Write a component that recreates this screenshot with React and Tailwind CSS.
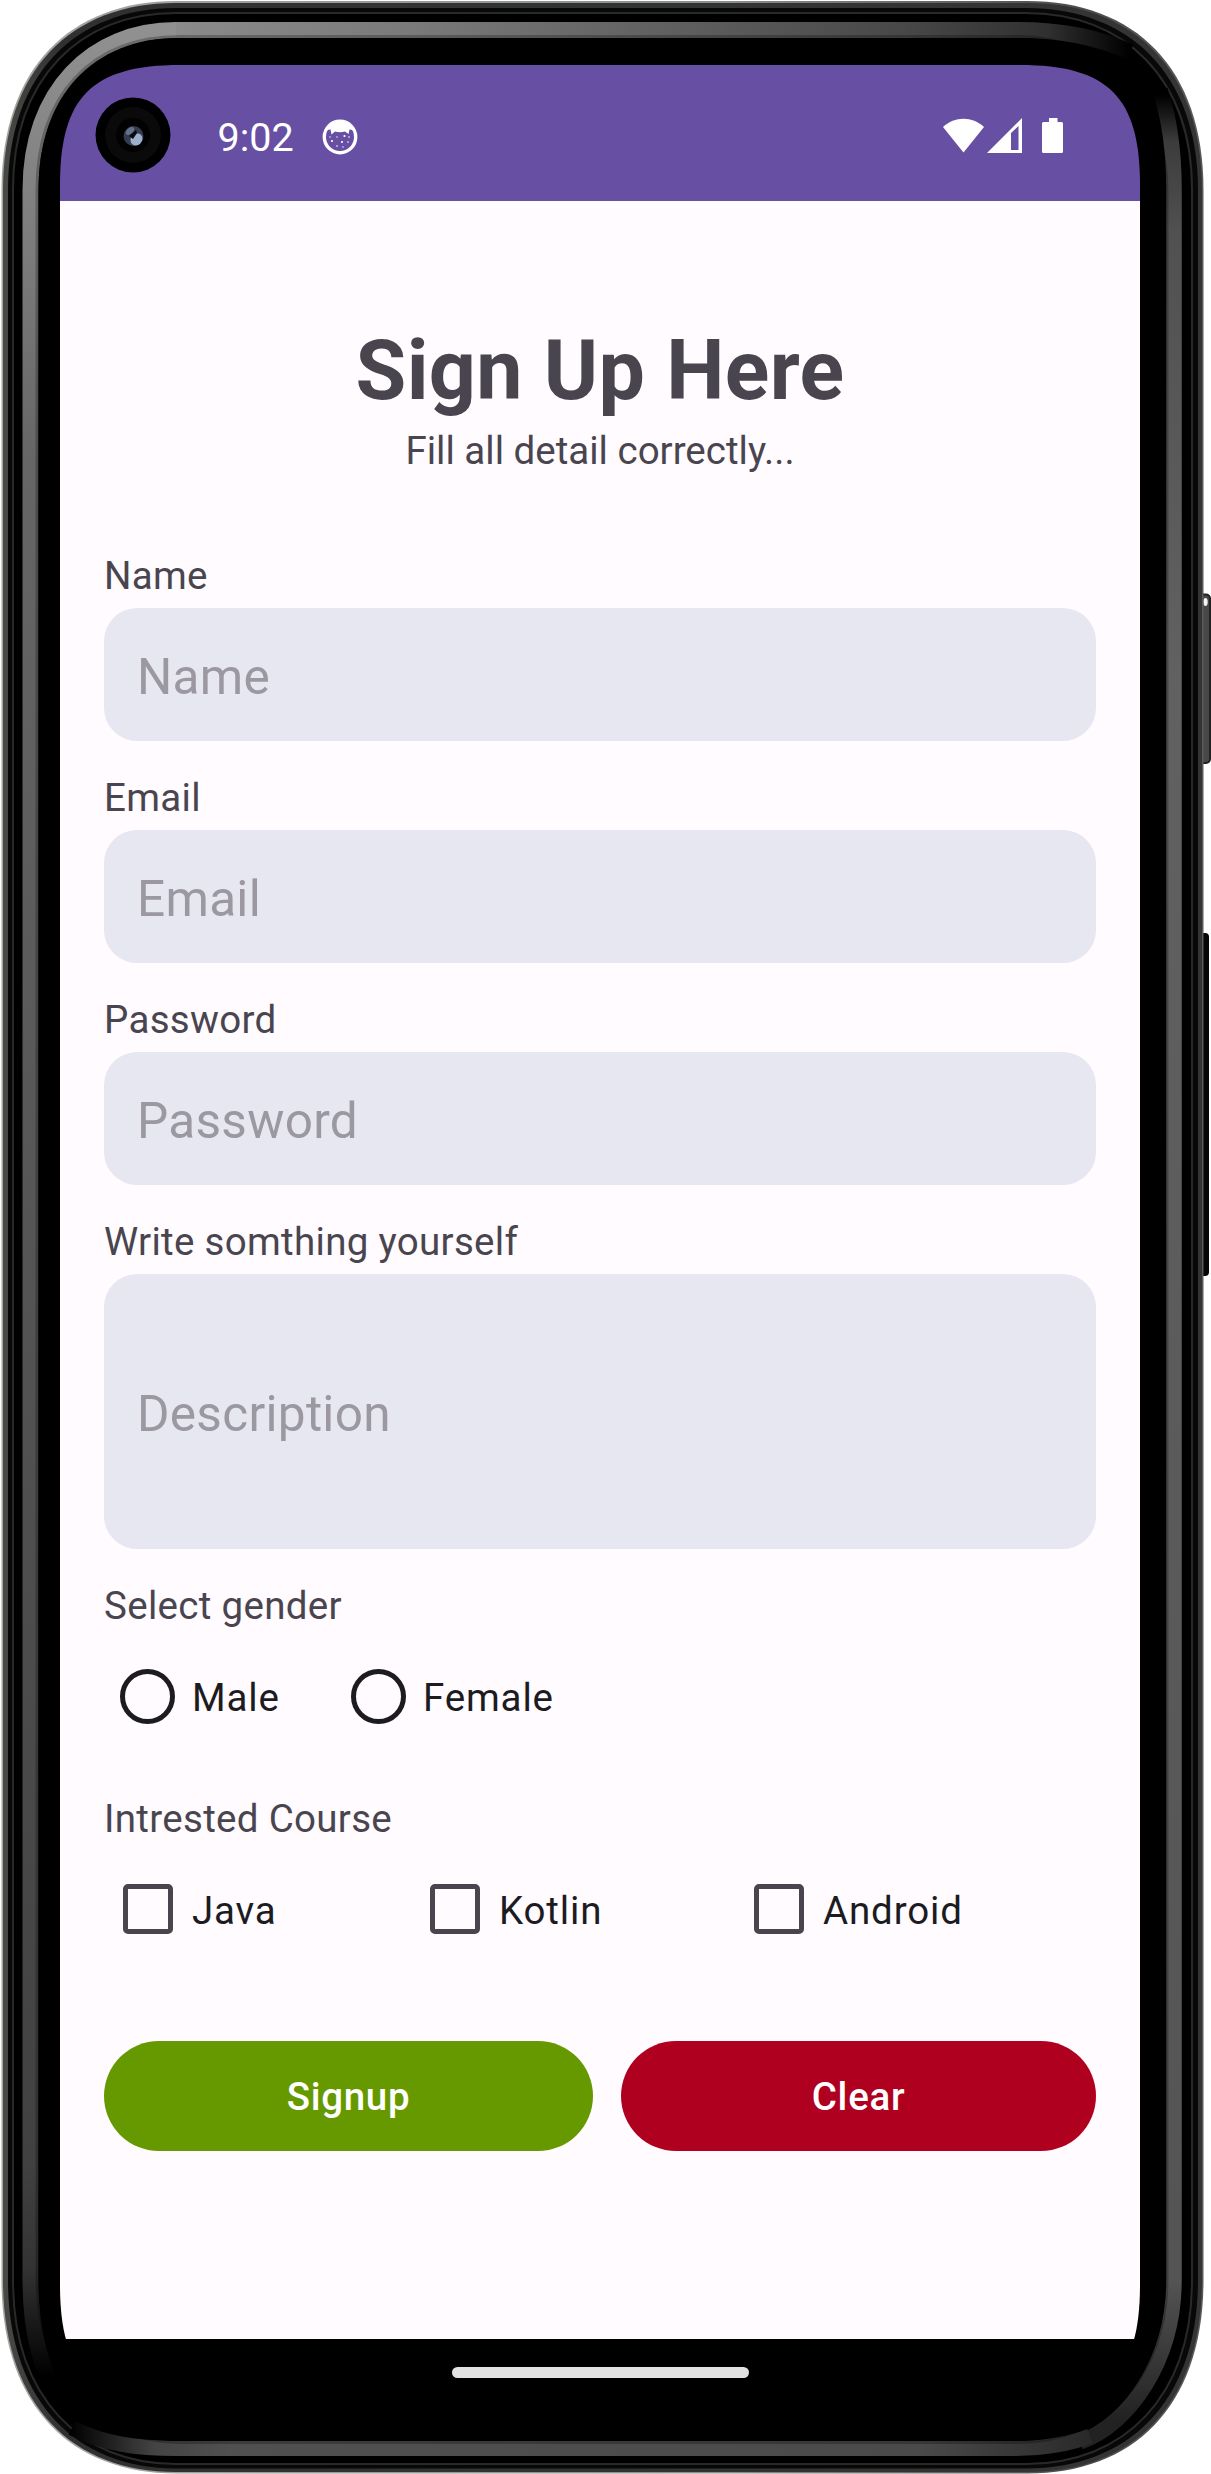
function PhoneFrame() {
  return (
    <svg className="absolute inset-0" width="1211" height="2474" viewBox="0 0 1211 2474" fill="none">
      <defs>
        <linearGradient id="rim" x1="0" y1="0" x2="1" y2="0">
          <stop offset="0" stopColor="#a3a69f" />
          <stop offset="0.6" stopColor="#8c8e8a" />
          <stop offset="0.9" stopColor="#4b4b4b" />
          <stop offset="1" stopColor="#5a5a5a" />
        </linearGradient>
        <linearGradient id="shell" x1="0" y1="0" x2="1" y2="0">
          <stop offset="0" stopColor="#474a47" />
          <stop offset="0.05" stopColor="#303030" />
          <stop offset="1" stopColor="#333535" />
        </linearGradient>
        <linearGradient id="leftGlow" x1="0" y1="30" x2="0" y2="2400" gradientUnits="userSpaceOnUse">
          <stop offset="0" stopColor="#909090" />
          <stop offset="0.1" stopColor="#7a7a7a" />
          <stop offset="0.18" stopColor="#666" />
          <stop offset="0.9" stopColor="#414141" />
          <stop offset="0.945" stopColor="#333" />
          <stop offset="0.99" stopColor="#000" />
        </linearGradient>
        <linearGradient id="topGlow" x1="100" y1="0" x2="1130" y2="0" gradientUnits="userSpaceOnUse">
          <stop offset="0" stopColor="#909090" />
          <stop offset="0.3" stopColor="#7a7a7a" />
          <stop offset="0.78" stopColor="#484848" />
          <stop offset="0.92" stopColor="#303030" />
          <stop offset="1" stopColor="#000" />
        </linearGradient>
        <linearGradient id="rightGlow" x1="0" y1="95" x2="0" y2="2420" gradientUnits="userSpaceOnUse">
          <stop offset="0" stopColor="#000" />
          <stop offset="0.02" stopColor="#3c3c3c" />
          <stop offset="0.06" stopColor="#515151" />
          <stop offset="0.25" stopColor="#616161" />
          <stop offset="0.94" stopColor="#545454" />
          <stop offset="1" stopColor="#222" />
        </linearGradient>
        <linearGradient id="bottomGlow" x1="70" y1="0" x2="1130" y2="0" gradientUnits="userSpaceOnUse">
          <stop offset="0" stopColor="#000" />
          <stop offset="0.08" stopColor="#444" />
          <stop offset="0.15" stopColor="#505050" />
          <stop offset="0.8" stopColor="#4a4a4a" />
          <stop offset="1" stopColor="#222" />
        </linearGradient>
      </defs>
      <rect x="1198.500" y="594.500" width="11.500" height="168.500" rx="4" fill="#484848" stroke="#222" strokeWidth="2" />
      <ellipse cx="1205.500" cy="602" rx="2.200" ry="4" fill="#f4f4f4" />
      <rect x="1199" y="933" width="10" height="343" rx="4" fill="#060606" />
      <path d="M176 1H1027C1135 1 1203.500 68 1203.500 190V2280C1203.500 2405 1135 2473.500 1027 2473.500H176C70 2473.500 1.500 2405 1.500 2280V190C1.500 68 70 1 176 1Z" fill="url(#rim)" />
      <path d="M176 3H1027C1134 3 1202 70 1202 190V2280C1202 2404 1134 2472 1027 2472H176C71 2472 3 2404 3 2280V190C3 70 71 3 176 3Z" fill="url(#shell)" />
      <path d="M176 8H1026C1129 8 1198 74 1198 190V2280C1198 2401 1129 2468.500 1026 2468.500H176C76 2468.500 8 2401 8 2280V190C8 74 76 8 176 8Z" fill="#080808" />
      <path d="M176 13H1026C1124 13 1192 78 1192 190V2280C1192 2397 1124 2464 1026 2464H176C80 2464 13 2397 13 2280V190C13 78 80 13 176 13Z" stroke="#292929" strokeWidth="2" fill="#000" />
      <path d="M30.500 2280V190C30.500 91 92 30 176 30" stroke="url(#leftGlow)" strokeWidth="16" />
      <path d="M176 30H1018C1064 30 1100 38 1130 52" stroke="url(#topGlow)" strokeWidth="16" />
      <path d="M30.500 2279C30.500 2325 38 2363 56 2393" stroke="url(#leftGlow)" strokeWidth="16" />
      <path d="M1160 90C1170 120 1174 153 1174 190V2280C1174 2360 1130 2424 1080 2442" stroke="url(#rightGlow)" strokeWidth="15.500" />
      <path d="M72 2428C104 2444 138 2448.500 176 2448.500H1010C1044 2448.500 1070 2444 1090 2436" stroke="url(#bottomGlow)" strokeWidth="15" />
      <path d="M180 38H1018C1106 38 1165.500 105 1165.500 190V2280C1165.500 2372 1108 2441 1018 2441H180C93 2441 38.500 2370 38.500 2280V190C38.500 96 92 38 180 38Z" fill="#000" stroke="#000" strokeOpacity="0.25" strokeWidth="6" />
    </svg>
  );
}

function Camera() {
  return (
    <svg width="76" height="76" viewBox="0 0 76 76">
      <circle cx="38" cy="38" r="37.500" fill="#000" />
      <circle cx="38" cy="38" r="28" fill="#0a0a0a" />
      <circle cx="38" cy="38" r="17" fill="#020202" />
      <circle cx="38.500" cy="39" r="10" fill="#343d4e" />
      <ellipse cx="41.500" cy="42.500" rx="6.500" ry="5.500" transform="rotate(-45 41.500 42.500)" fill="#9db0cb" />
      <ellipse cx="35" cy="34" rx="5" ry="3" transform="rotate(-40 35 34)" fill="#64718a" />
      <path d="M34 39L41 33L42 36L38 42Z" fill="#080a0e" />
    </svg>
  );
}

function CatIcon() {
  return (
    <svg width="36" height="36" viewBox="0 0 36 36">
      <circle cx="18" cy="18" r="15.700" fill="none" stroke="#fff" strokeWidth="3.400" />
      <path d="M5 11C8 1 28 1 31 11L27.500 10.500L26.500 15L23 12.500Q18 14 13 12.500L9.500 15.500L8.500 10.500Z" fill="#fff" />
      <g fill="#fff">
        <circle cx="10" cy="22" r="1.100" />
        <circle cx="22.500" cy="17" r="1.100" />
        <circle cx="20" cy="23" r="1.100" />
        <circle cx="26" cy="23" r="0.800" />
        <circle cx="15" cy="18" r="0.700" />
        <circle cx="15" cy="27" r="0.800" />
        <circle cx="21" cy="28" r="0.700" />
        <circle cx="8" cy="18" r="0.700" />
        <circle cx="27" cy="18" r="0.800" />
      </g>
    </svg>
  );
}

function StatusBar() {
  return (
    <header className="flex h-[136px] items-start bg-[#6750a4] text-white">
      <div className="ml-[34.500px] mt-[31.500px]"><Camera /></div>
      <span className="ml-[47px] mt-[53px] w-[75px] text-[39.500px] leading-none">9:02</span>
      <div className="ml-[29px] mt-[53.500px]"><CatIcon /></div>
      <svg className="ml-auto mr-[76px] mt-[52px]" width="121" height="37" viewBox="0 0 121 37" fill="#fff">
        <path d="M0 10C11.500-1 29.500-1 41 10L20.500 35.500Z" />
        <path fillRule="evenodd" d="M44 36L79 1V36ZM68 16V33H75.500V9Z" />
        <path d="M106 1H114.500V5H118.500Q120 5 120 6.500V34.500Q120 36 118.500 36H100.500Q99 36 99 34.500V6.500Q99 5 100.500 5H106Z" />
      </svg>
    </header>
  );
}

function Field({ label, placeholder, box }) {
  return (
    <label className="block">
      <span className="block h-[52px] text-[38.500px] leading-[40px] tracking-[0.008em]">{label}</span>
      <span className={"flex items-center rounded-[33px] bg-[#e6e7f1] pl-[33px] pt-[5px] text-[49.500px] tracking-[0.006em] text-[#9b98a2] " + box}>
        {placeholder}
      </span>
    </label>
  );
}

function Radio({ label, className }) {
  return (
    <div className={"flex items-center text-[38.500px] leading-none tracking-[0.022em] text-[#1c1b1f] " + className}>
      <span className="size-[55px] rounded-full border-[5.500px] border-[#1c1b1f]" />
      <span className="ml-[17px] mt-[3px]">{label}</span>
    </div>
  );
}

function Check({ label, className }) {
  return (
    <div className={"flex items-center text-[38.500px] leading-none tracking-[0.022em] text-[#1c1b1f] " + className}>
      <span className="size-[50px] rounded-[5px] border-[5.500px] border-[#49454f]" />
      <span className="ml-[19px] mt-[4px]">{label}</span>
    </div>
  );
}

export default function App() {
  return (
    <main className="relative h-[2474px] w-[1211px] overflow-hidden bg-white font-['Roboto',sans-serif] text-[#49454f]">
      <PhoneFrame />
      <div className="relative ml-[60px] flex w-[1080px] flex-col pt-[65px]">
        <section className="flex h-[2340px] flex-col overflow-hidden bg-black [clip-path:path('M0,120C0,32,32,0,120,0H960C1048,0,1080,32,1080,120V2220C1080,2308,1048,2340,960,2340H120C32,2340,0,2308,0,2220Z')]">
          <StatusBar />
          <div className="flex h-[2138px] flex-col bg-[#fffbff] px-11 pt-[121px]">
            <h1 className="h-[97px] text-center text-[82.500px] font-bold leading-[97px] tracking-[0.0045em]">Sign Up Here</h1>
            <p className="h-[52px] text-center text-[38.500px] leading-[63px]">Fill all detail correctly...</p>
            <form className="mt-[85px]">
              <div className="flex flex-col gap-[37px]">
                <Field label="Name" placeholder="Name" box="h-[133px]" />
                <Field label="Email" placeholder="Email" box="h-[133px]" />
                <Field label="Password" placeholder="Password" box="h-[133px]" />
                <Field label="Write somthing yourself" placeholder="Description" box="h-[275px]" />
              </div>
              <p className="mt-[31px] h-[52px] text-[38.500px] leading-[52px] tracking-[0.008em]">Select gender</p>
              <div className="mt-[37px] flex pl-4">
                <Radio label="Male" className="w-[231px]" />
                <Radio label="Female" className="" />
              </div>
              <p className="mt-[69px] h-[52px] text-[38.500px] leading-[52px] tracking-[0.008em]">Intrested Course</p>
              <div className="mt-[39px] flex pl-[19px]">
                <Check label="Java" className="w-[307px]" />
                <Check label="Kotlin" className="w-[324px]" />
                <Check label="Android" className="" />
              </div>
              <div className="mt-[107px] flex h-[110px] justify-between text-[38.500px] font-medium tracking-[0.018em] text-white">
                <button type="button" className="w-[489px] rounded-full bg-[#669900] pt-[2px]">Signup</button>
                <button type="button" className="w-[475px] rounded-full bg-[#b00020] pt-[2px]">Clear</button>
              </div>
            </form>
          </div>
          <div className="flex h-[66px] items-center justify-center">
            <span className="h-[11px] w-[297px] rounded-full bg-[#e2e2e2]" />
          </div>
        </section>
      </div>
    </main>
  );
}
